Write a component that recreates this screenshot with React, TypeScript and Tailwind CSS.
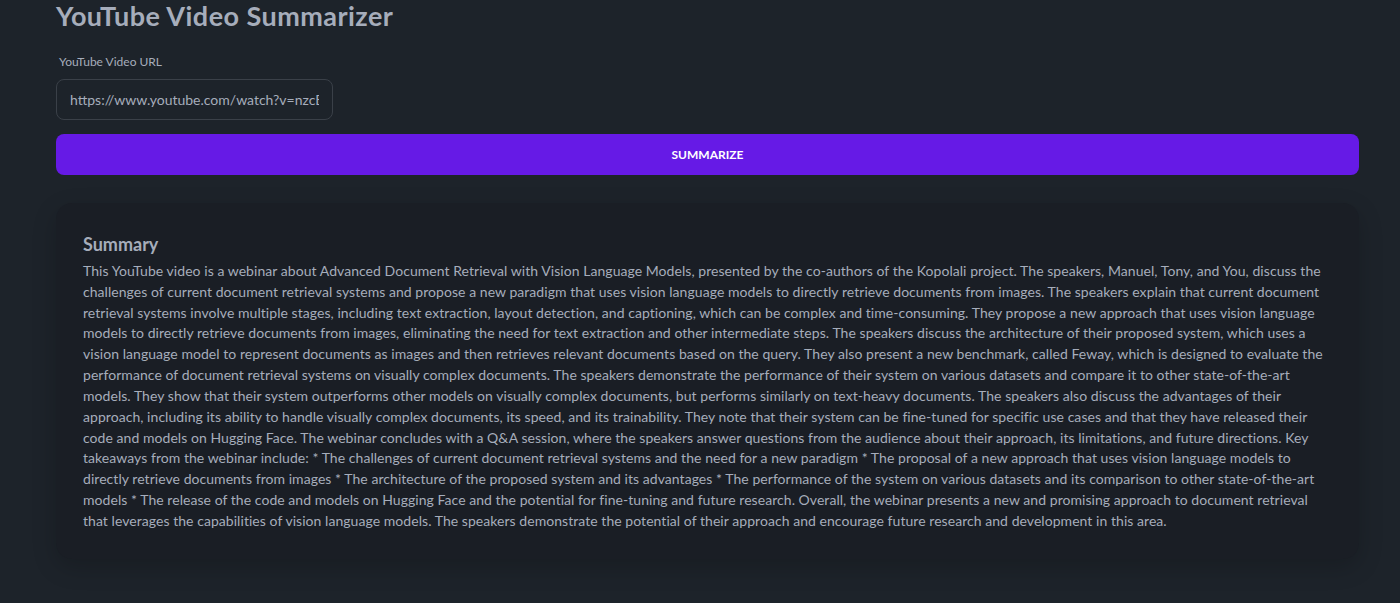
import React from "react";

const summary =
  "This YouTube video is a webinar about Advanced Document Retrieval with Vision Language Models, presented by the co-authors of the Kopolali project. The speakers, Manuel, Tony, and You, discuss the challenges of current document retrieval systems and propose a new paradigm that uses vision language models to directly retrieve documents from images. The speakers explain that current document retrieval systems involve multiple stages, including text extraction, layout detection, and captioning, which can be complex and time-consuming. They propose a new approach that uses vision language models to directly retrieve documents from images, eliminating the need for text extraction and other intermediate steps. The speakers discuss the architecture of their proposed system, which uses a vision language model to represent documents as images and then retrieves relevant documents based on the query. They also present a new benchmark, called Feway, which is designed to evaluate the performance of document retrieval systems on visually complex documents. The speakers demonstrate the performance of their system on various datasets and compare it to other state-of-the-art models. They show that their system outperforms other models on visually complex documents, but performs similarly on text-heavy documents. The speakers also discuss the advantages of their approach, including its ability to handle visually complex documents, its speed, and its trainability. They note that their system can be fine-tuned for specific use cases and that they have released their code and models on Hugging Face. The webinar concludes with a Q&A session, where the speakers answer questions from the audience about their approach, its limitations, and future directions. Key takeaways from the webinar include: * The challenges of current document retrieval systems and the need for a new paradigm * The proposal of a new approach that uses vision language models to directly retrieve documents from images * The architecture of the proposed system and its advantages * The performance of the system on various datasets and its comparison to other state-of-the-art models * The release of the code and models on Hugging Face and the potential for fine-tuning and future research. Overall, the webinar presents a new and promising approach to document retrieval that leverages the capabilities of vision language models. The speakers demonstrate the potential of their approach and encourage future research and development in this area.";

export default function App() {
  return (
    <div
      className="min-h-[603px] bg-[#1d232a] text-[#a6adbb] pl-[56px] pr-[41px] pb-10"
      style={{ fontFamily: 'Lato, "Open Sans", sans-serif' }}
    >
      <h1 className="text-[27px] font-bold leading-[32px] tracking-[0.45px] text-[#a6adbb]">
        YouTube Video Summarizer
      </h1>

      <div className="mt-[22px] flex flex-col">
        <label className="px-[3px] text-[12px] leading-[16px] text-[#a6adbb]">
          YouTube Video URL
        </label>
        <input
          type="text"
          defaultValue="https://www.youtube.com/watch?v=nzcEbLRHw84"
          className="mt-[9px] h-[41px] w-[277px] rounded-[8px] border border-[#3a4048] bg-transparent px-[13px] text-[14px] text-[#a6adbb] outline-none"
        />
      </div>

      <button className="mt-[14px] h-[41px] w-full rounded-[8px] bg-[#661ae6] text-[12px] font-bold uppercase text-white">
        Summarize
      </button>

      <div className="mt-[28px] rounded-[16px] bg-[#1a1e25] px-[27px] pt-[30px] pb-[27px] shadow-[0_8px_24px_rgba(0,0,0,0.18)]">
        <h2 className="text-[18px] font-bold leading-[22px] text-[#a6adbb]">Summary</h2>
        <p className="mt-[6px] text-[14px] leading-[20.83px] tracking-[0.05px] text-[#a6adbb]">
          {summary}
        </p>
      </div>
    </div>
  );
}
